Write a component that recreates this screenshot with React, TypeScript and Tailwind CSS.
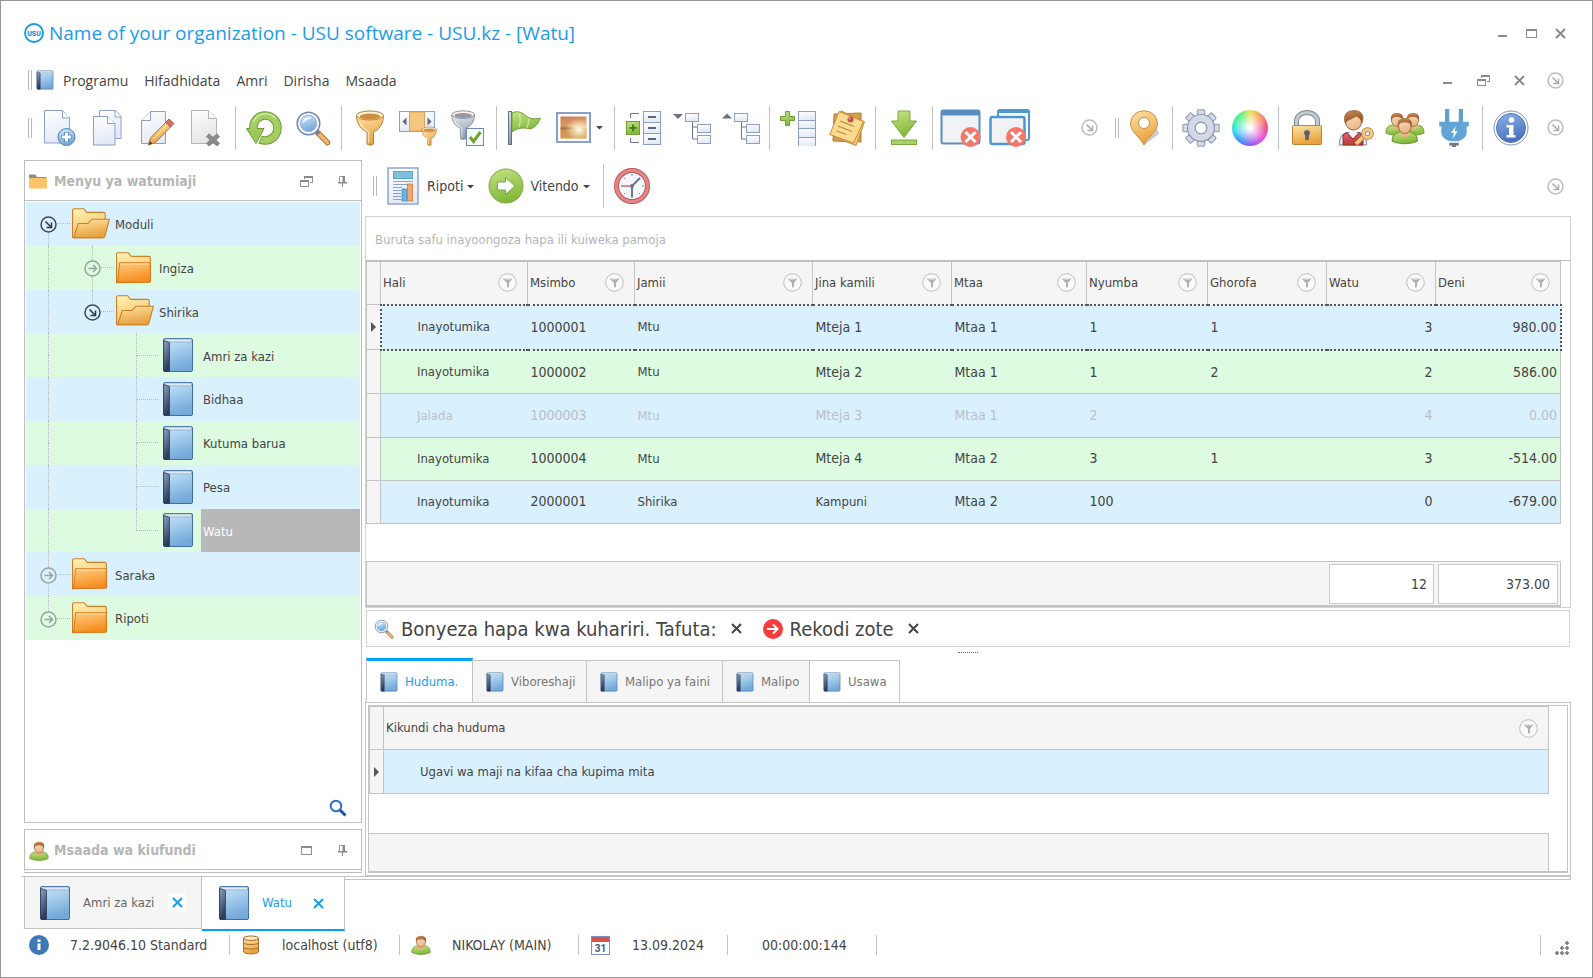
import { useState } from 'react'
import type { ReactNode } from 'react'
import clsx from 'clsx'

type IconProps = { size?: number; box?: number; children: ReactNode }

function Icon({ size = 36, box = 36, children }: IconProps) {
  return (
    <svg width={size} height={size} viewBox={`0 0 ${box} ${box}`} fill="none" className="shrink-0" aria-hidden="true">
      {children}
    </svg>
  )
}

const gradients: [string, string, string][] = [
  ['paper', '#ffffff', '#e3e9f5'],
  ['gray', '#fdfdfd', '#e6e6e6'],
  ['green', '#c5e384', '#83b93c'],
  ['gold', '#fde3a6', '#e9a23f'],
  ['steel', '#eceff4', '#8f9aad'],
  ['blue', '#cdeafa', '#74a9d8'],
  ['navy', '#8da2c0', '#2c3a5c'],
  ['orange', '#ffcd80', '#f58f22'],
  ['cream', '#fff3b8', '#f3bf62'],
  ['red', '#e0696c', '#b93a40'],
  ['info', '#8fb1e6', '#4a73bd'],
  ['skin', '#fbe0c0', '#eab688'],
  ['hair', '#c98a55', '#8e5427'],
  ['sunset', '#c77b52', '#f7c98a'],
]

function Gradients() {
  return (
    <svg className="absolute size-0" aria-hidden="true">
      <defs>
        {gradients.map(([id, from, to]) => (
          <linearGradient key={id} id={id} x1="0" y1="0" x2="0.3" y2="1">
            <stop offset="0" stopColor={from} />
            <stop offset="1" stopColor={to} />
          </linearGradient>
        ))}
        <radialGradient id="sun" cx="0.7" cy="0.6" r="0.5">
          <stop offset="0" stopColor="#fffbe0" />
          <stop offset="1" stopColor="#fffbe0" stopOpacity="0" />
        </radialGradient>
      </defs>
    </svg>
  )
}

/* ---------- icons ---------- */

function Book({ size = 36 }: { size?: number }) {
  return (
    <Icon size={size}>
      <rect x="3.5" y="1.5" width="29" height="33" rx="1.5" fill="url(#blue)" stroke="#3f6ea8" />
      <path d="M4 3.5C4 2.500 5 2 6 2h25.500v3H10z" fill="#dce8f2" stroke="#7f9cbd" strokeWidth=".6" />
      <path d="M3.500 3.500 9.500 5.500V34.500H5A1.500 1.500 0 0 1 3.500 33z" fill="url(#navy)" stroke="#2c3a5c" strokeWidth=".8" />
    </Icon>
  )
}

function Folder() {
  return (
    <Icon size={38}>
      <path d="M.5 32V5c0-1 .5-1.500 1.500-1.500h9.500l3 3.500H31c1 0 1.500.5 1.500 1.500V31z" fill="url(#cream)" stroke="#c97f27" />
      <path d="M3.500 13h29v17c0 1-.5 1.500-1.500 1.500H1.500z" fill="url(#orange)" stroke="#d9781a" />
      <path d="M4.500 14.200H31.500" stroke="#ffe0a8" />
    </Icon>
  )
}

function OpenFolder() {
  return (
    <Icon size={38}>
      <path d="M.5 30.500V5c0-1 .5-1.500 1.500-1.500h9l3 3.500H30c1 0 1.500.5 1.500 1.500V18L29 31H1.500c-.6 0-1 0-1-.5z" fill="url(#cream)" stroke="#c97f27" />
      <path d="M1.500 31 6 17.500h9l4-4h16.500L31 30c-.3.800-.7 1-1.500 1z" fill="url(#gold)" stroke="#c97f27" />
    </Icon>
  )
}

function Magnifier({ size = 36 }: { size?: number }) {
  return (
    <Icon size={size}>
      <path d="m23 23 9.500 9.500" stroke="#b06f2e" strokeWidth="5.500" strokeLinecap="round" />
      <path d="m24.500 24.500 8 8" stroke="#f0b878" strokeWidth="3.500" strokeLinecap="round" />
      <path d="m20 20 4 4" stroke="#6f84ad" strokeWidth="3" />
      <circle cx="13.500" cy="13.500" r="11.300" fill="#fff" stroke="#7288bd" strokeWidth="1.500" />
      <circle cx="13.500" cy="13.500" r="8.300" fill="url(#blue)" stroke="#9db1d8" />
      <path d="M7.500 13a6 6 0 0 1 6-6c2 0 3 .6 3 1.500-5 .5-6.500 4-9 4.500z" fill="#fff" opacity=".8" />
    </Icon>
  )
}

function NewPage() {
  return (
    <Icon>
      <path d="M2.500.5h18l7 7.500v25h-25z" fill="url(#paper)" stroke="#8c9fca" />
      <path d="M20.500.5V8h7" fill="#fff" stroke="#8c9fca" />
      <circle cx="24.500" cy="27" r="8.500" fill="url(#blue)" stroke="#4f80bb" />
      <path d="M24.500 22v10M19.500 27h10" stroke="#4f80bb" strokeWidth="4.500" />
      <path d="M24.500 22.500v9M20 27h9" stroke="#fff" strokeWidth="2.800" />
    </Icon>
  )
}

function CopyPages() {
  return (
    <Icon>
      <path d="M8.500.5h16l5.500 6v22H8.500z" fill="url(#paper)" stroke="#8c9fca" />
      <path d="M24 .5V7h6" fill="#fff" stroke="#8c9fca" />
      <path d="M2.500 6.500h14L24 13.500V35H2.500z" fill="url(#paper)" stroke="#8c9fca" />
      <path d="M16.500 6.500v7H24" fill="#fff" stroke="#8c9fca" />
    </Icon>
  )
}

function EditPage() {
  return (
    <Icon>
      <path d="M10.500 1.500h15v32h-24v-23z" fill="url(#paper)" stroke="#8c9fca" />
      <path d="M10.500 1.500v9h-9" fill="#fff" stroke="#8c9fca" />
      <path d="m8.500 35 2-7L26 12l5 4.500L15.500 32.500z" fill="url(#gold)" stroke="#b9752c" />
      <path d="m25.500 12.500 3.500-3.500 5 4.500-3.500 3.500z" fill="#d96a5f" stroke="#a94a40" strokeWidth=".8" />
      <path d="m8.500 35 1.300-4 2.700 2.600z" fill="#444" />
      <path d="M13 29.500 27.500 14.500" stroke="#fff0cc" />
    </Icon>
  )
}

function DeletePage() {
  return (
    <Icon>
      <path d="M2.500.5h17l8 8v25h-25z" fill="url(#gray)" stroke="#b5b5b5" />
      <path d="M19.500.5v8h8" fill="#fff" stroke="#b5b5b5" />
      <path d="m18.500 25 11 10M29.500 25l-11 10" stroke="#8a8a8a" strokeWidth="4.500" />
    </Icon>
  )
}

function Refresh() {
  return (
    <Icon>
      <path d="M7.500 20C6.500 11.500 12 5.500 19 5.500S31.500 11 31.500 18 26 30.500 19 30.500c-2 0-3.500-.4-5-1" stroke="#6b9a35" strokeWidth="8.500" />
      <path d="M.5 18.500H18L10 33.500z" fill="#9dc958" stroke="#6b9a35" />
      <path d="M7.500 20C6.500 11.500 12 5.500 19 5.500S31.500 11 31.500 18 26 30.500 19 30.500c-1.700 0-3-.3-4.500-.8" stroke="#a4ce62" strokeWidth="6.600" />
      <path d="M7 12.500C9.500 7 14 3.700 19.500 3.700c4 0 7.500 1.500 10 4.500" stroke="#cfe99a" strokeWidth="1.500" />
    </Icon>
  )
}

function FunnelShape({ fill, stroke, hole }: { fill: string; stroke: string; hole: string }) {
  return (
    <g>
      <path d="M4.500 5.500c0 9 5 14 10.500 16.500V34c2 1.500 4.500 1.500 6.500 0V22c5-2.500 10-7.500 10-16.500z" fill={fill} stroke={stroke} />
      <ellipse cx="18" cy="5.500" rx="13.500" ry="4.500" fill="#fff4dd" stroke={stroke} />
      <ellipse cx="18" cy="6.500" rx="10.500" ry="3" fill={hole} />
      <path d="M8 13c1.500 4 5 7 8.500 9v11" stroke="#fff" strokeWidth="1.500" opacity=".55" />
    </g>
  )
}

function Funnel() {
  return <Icon><FunnelShape fill="url(#gold)" stroke="#bd7b2c" hole="#cf8f43" /></Icon>
}

function ColumnFilter() {
  return (
    <svg width="40" height="36" viewBox="0 0 40 36" fill="none" aria-hidden="true">
      <rect x=".5" y="1.500" width="35" height="20" fill="url(#paper)" stroke="#8c9fca" />
      <rect x="10.500" y="2" width="15" height="19" fill="#f6c77f" stroke="#dda557" />
      <path d="M7.500 7.500v8l-4-4zM28.500 7.500v8l4-4z" fill="#5d6580" />
      <g transform="translate(20.500 16.500) scale(.54)"><FunnelShape fill="url(#gold)" stroke="#a9621c" hole="#cf8f43" /></g>
    </svg>
  )
}

function FilterCheck() {
  return (
    <Icon>
      <g transform="translate(-2 0) scale(.84)"><FunnelShape fill="url(#steel)" stroke="#7a8497" hole="#8f99aa" /></g>
      <rect x="16.500" y="18.500" width="17" height="17" fill="#f6f9fd" stroke="#7288bd" />
      <path d="m20 27 3.500 4.500L30.500 22" stroke="#6fa52e" strokeWidth="3" />
    </Icon>
  )
}

function Flag() {
  return (
    <Icon>
      <rect x="1.500" y="1.500" width="3" height="33" fill="url(#steel)" stroke="#66708a" />
      <path d="M5 3c6-3 11 0 14 3 4 3 9 3.500 14.500 2-1.500 3-3 7-7 9.500-3.500 2.500-6 .5-10 .5-5 0-8 1.500-11.500 4z" fill="url(#green)" stroke="#6d9e37" />
      <path d="M12 3c2 5 1 11 0 14M22 8c0 4-1 7-2 10" stroke="#d8efae" strokeWidth="1.500" opacity=".7" />
    </Icon>
  )
}

function Picture() {
  return (
    <Icon>
      <rect x="1" y="3" width="33" height="29" fill="#fff" stroke="#8c9fca" strokeWidth="2" />
      <rect x="4.500" y="6.500" width="26" height="22" fill="url(#sunset)" />
      <path d="M4.500 18h26v10.500h-26z" fill="#c98743" opacity=".7" />
      <path d="M4.500 16.500c5 0 10 .5 14 1.500-4 1-9 1.500-14 1.500z" fill="#8a5a36" opacity=".5" />
      <rect x="4.500" y="6.500" width="26" height="22" fill="url(#sun)" />
    </Icon>
  )
}

function GroupRows() {
  return (
    <Icon>
      <path d="M14 3.500H5.500V8M5.500 28v4.500H14" stroke="#6b7390" />
      <rect x="1.500" y="11.500" width="13" height="13" fill="url(#green)" stroke="#6d9e37" />
      <path d="M8 14.500v7M4.500 18h7" stroke="#4c7a1e" strokeWidth="2" />
      {[1.500, 12.500, 23.500].map((y) => (
        <g key={y}>
          <rect x="18.500" y={y} width="17" height="11" fill="url(#paper)" stroke="#8c9fca" />
          <path d={`M23 ${y + 5.500}h8`} stroke="#5d6580" strokeWidth="2" />
        </g>
      ))}
    </Icon>
  )
}

function Tree({ up = false }: { up?: boolean }) {
  return (
    <svg width="38" height="36" viewBox="0 0 38 36" fill="none" aria-hidden="true">
      <path d={up ? 'M0 8.500h10L5 3.500z' : 'M0 4h10L5 9z'} fill="#6a7088" />
      <path d="M19.500 11v18H26M19.500 17H26" stroke="#6b7390" />
      <rect x="12.500" y="3.500" width="13" height="8" fill="url(#paper)" stroke="#8c9fca" />
      <rect x="24.500" y="14.500" width="13" height="8" fill="url(#paper)" stroke="#8c9fca" />
      <rect x="24.500" y="25.500" width="13" height="8" fill="url(#paper)" stroke="#8c9fca" />
    </svg>
  )
}

function AddColumn() {
  return (
    <Icon>
      <path d="M5.500 1.500h4v5h5v4h-5v5h-4v-5h-5v-4h5z" fill="url(#green)" stroke="#6d9e37" />
      {[1.500, 10.500, 18.500, 27.500].map((y) => (
        <rect key={y} x="18.500" y={y} width="17" height={y === 10.5 ? 8 : 9} fill="url(#paper)" stroke="#8c9fca" />
      ))}
    </Icon>
  )
}

function Notes() {
  return (
    <Icon>
      <path d="M5 4 32 3v29L4 31z" fill="#d8a04e" stroke="#b37d30" />
      <path d="m12 .8 23.500 11L27 35.500 5 27z" fill="#f3c877" stroke="#c48c3b" />
      <path d="m10 1.500 24.500 10L24.500 33 .8 24.500z" fill="#fbdc8f" stroke="#c48c3b" />
      <path d="m11 11 14 5.500M9 16l14 5.500M7.500 21l10 3.500" stroke="#b8893e" strokeWidth="1.300" />
      <circle cx="21.500" cy="9.500" r="3" fill="#c64a50" />
      <circle cx="20.500" cy="8.500" r="1.100" fill="#f3a5a5" />
    </Icon>
  )
}

function Download() {
  return (
    <Icon>
      <path d="M12 1h12v10h6.500L18 27.500 5.500 11H12z" fill="url(#green)" stroke="#7aab41" />
      <rect x="5.500" y="30" width="25" height="4.500" fill="#a9cf68" stroke="#7aab41" />
    </Icon>
  )
}

function RedCross({ cx }: { cx: number }) {
  return (
    <g>
      <circle cx={cx} cy="28" r="10" fill="#f5776b" />
      <path d={`m${cx - 5} 23 10 10m0-10-10 10`} stroke="#fff" strokeWidth="3" />
    </g>
  )
}

function CloseWindow() {
  return (
    <svg width="41" height="38" viewBox="0 0 41 38" fill="none" aria-hidden="true">
      <rect x="1.500" y="1.500" width="38" height="33" rx="2" fill="#f1f2f4" stroke="#5b8dc4" strokeWidth="2" />
      <path d="M1.500 1h38v5.500h-38z" fill="#5b8dc4" />
      <RedCross cx={30.500} />
    </svg>
  )
}

function CloseAllWindows() {
  return (
    <svg width="41" height="38" viewBox="0 0 41 38" fill="none" aria-hidden="true">
      <rect x="9" y="1" width="31" height="30" rx="2" fill="#fff" stroke="#4a98cf" strokeWidth="2" />
      <path d="M9 1h31v3H9z" fill="#4a98cf" />
      <rect x="1.500" y="8" width="34" height="27" rx="2" fill="#f1f2f4" stroke="#4a98cf" strokeWidth="2.500" />
      <RedCross cx={27} />
    </svg>
  )
}

function Pin() {
  return (
    <Icon>
      <path d="M18 35 31 19l2 5z" fill="#aaa" opacity=".6" />
      <path d="M18 35C14 27 4.500 22 4.500 13.500a13.500 12.800 0 0 1 27 0C31.500 22 22 27 18 35z" fill="url(#gold)" stroke="#c78f45" />
      <circle cx="18" cy="13" r="5.500" fill="#fff" stroke="#c78f45" />
    </Icon>
  )
}

function Gear() {
  return (
    <Icon size={38}>
      {[0, 45, 90, 135].map((a) => (
        <rect key={a} x="14.500" y=".8" width="7" height="34.400" rx="1" fill="#d3dae6" stroke="#8c9ab5" transform={`rotate(${a} 18 18)`} />
      ))}
      <circle cx="18" cy="18" r="12.800" fill="url(#steel)" stroke="#8c9ab5" />
      <circle cx="18" cy="18" r="12" fill="#d3dae6" />
      <circle cx="18" cy="18" r="5.500" fill="#fff" stroke="#8c9ab5" strokeWidth="1.200" />
    </Icon>
  )
}

function ColorWheel() {
  return (
    <span className="size-9 rounded-full bg-[radial-gradient(circle,white_5%,transparent_65%),conic-gradient(#e8e45a,#f79a5c_40deg,#ee4f86_85deg,#e84fd8_130deg,#8a5cf0_180deg,#3f8cf5_215deg,#35d0f5_255deg,#3df0b0_290deg,#5cf07a_325deg,#e8e45a)]" />
  )
}

function Padlock() {
  return (
    <Icon>
      <path d="M7.500 16v-5a10.500 8.500 0 0 1 21 0v5" stroke="#7f8792" strokeWidth="5" />
      <path d="M7.500 16v-5a10.500 8.500 0 0 1 21 0v5" stroke="#c3cad3" strokeWidth="3" />
      <rect x="3.500" y="15.500" width="29" height="19" rx="1" fill="url(#gold)" stroke="#b98331" />
      <path d="M18 20a3 3 0 0 1 1.800 5.400V30h-3.600v-4.600A3 3 0 0 1 18 20z" fill="#5a6270" />
    </Icon>
  )
}

function UserKey() {
  return (
    <Icon>
      <path d="M1.500 35c0-8 2-11 8-12.500h11c6 1.500 8 4.500 8 12.500z" fill="#f4f4f6" stroke="#777f8f" />
      <path d="M5 35V25l4-2.500 6 6.500 6-6.500 4 2.500v10z" fill="url(#red)" stroke="#8f2e33" />
      <path d="m11 22 4 6 4-6z" fill="#fff" />
      <circle cx="15.500" cy="12" r="8" fill="url(#skin)" stroke="#9a6534" />
      <path d="M7 13C5 4 9 .5 16 .5S27 5 24 13c-1-4-3-6-6-7-3 3-8 3-11 7z" fill="url(#hair)" stroke="#8e5427" strokeWidth=".6" />
      <path d="m18 34 9-9" stroke="#b07830" strokeWidth="5" />
      <path d="m18 34 9-9" stroke="#f2c98c" strokeWidth="3.200" />
      <circle cx="29.500" cy="23.500" r="4" stroke="#b07830" strokeWidth="4.500" />
      <circle cx="29.500" cy="23.500" r="4" stroke="#f2c98c" strokeWidth="3" />
    </Icon>
  )
}

function Person({ x, y }: { x: number; y: number }) {
  return (
    <g transform={`translate(${x} ${y})`}>
      <path d="M.5 20c0-6 3-7.500 7-8h8c4 .5 7 2 7 8-6 3-16 3-22 0z" fill="url(#green)" stroke="#6d9e37" />
      <path d="M7.500 11v4c2.500 2 5.500 2 8 0v-4z" fill="#eab688" />
      <ellipse cx="11.500" cy="7" rx="5.500" ry="6.500" fill="url(#skin)" stroke="#9a6534" strokeWidth=".8" />
      <path d="M5.500 8C4.500 2 7 .3 11.500.3S18.500 2 17.500 8c-1-3-2-4-6-4s-5 1-6 4z" fill="url(#hair)" />
    </g>
  )
}

function Users() {
  return (
    <svg width="40" height="36" viewBox="0 0 40 36" fill="none" aria-hidden="true">
      <Person x={0.5} y={3} />
      <Person x={16.500} y={3} />
      <g transform="translate(6 8) scale(1.150)"><Person x={0.5} y={0} /></g>
    </svg>
  )
}

function User({ size = 20 }: { size?: number }) {
  return (
    <Icon size={size} box={24}>
      <g transform="translate(.5 1)"><Person x={0} y={0} /></g>
    </Icon>
  )
}

function Plug() {
  return (
    <Icon size={38}>
      <path d="M11.500 0v13M24.500 0v13" stroke="#5f9fd2" strokeWidth="4" />
      <path d="M4 12h28v4.500h-2V22c0 4.500-4 7.500-8.500 8.500h-7C10 29.500 6 26.500 6 22v-5.500H4z" fill="#63a4d6" />
      <path d="M13.500 32h9v2.500H20V36h-4v-1.500h-2.500z" fill="#737b85" />
      <path d="m20 16-5 6.500h3l-1.500 6 5-7.500h-3z" fill="#fff" />
    </Icon>
  )
}

function Info() {
  return (
    <Icon>
      <circle cx="18" cy="18" r="17" fill="#fff" stroke="#7b93c4" />
      <circle cx="18" cy="18" r="14.500" fill="url(#info)" stroke="#5576b5" />
      <circle cx="18.500" cy="10" r="2.800" fill="#fff" />
      <path d="M13.500 15h7v10h2v2.500h-9V25h2.500v-7.500h-2.500z" fill="#fff" />
    </Icon>
  )
}

function ReportIcon() {
  return (
    <svg width="32" height="38" viewBox="0 0 32 38" fill="none" aria-hidden="true">
      <rect x="1" y="1" width="30" height="36" fill="url(#paper)" stroke="#8aa6d6" strokeWidth="1.500" />
      <rect x="6.500" y="4.500" width="19" height="7" fill="#7fc0e0" stroke="#5ba3ca" />
      <path d="M6 14.500h20M6 17.500h15M6 20.500h9M6 23.500h8M6 26.500h8M6 29.500h8M6 32.500h8" stroke="#8fa3c6" />
      <rect x="15" y="22" width="5" height="12" fill="#6cb5dc" stroke="#3f8fbd" strokeWidth=".8" />
      <rect x="20.500" y="17" width="5" height="17" fill="#f3a56a" stroke="#d07a3c" strokeWidth=".8" />
    </svg>
  )
}

function GoIcon() {
  return (
    <Icon>
      <circle cx="18" cy="18" r="17" fill="url(#green)" stroke="#79a743" />
      <path d="M9.500 14h8V9.500L27 18l-9.500 8.500V22h-8z" fill="#fff" stroke="#79a743" />
    </Icon>
  )
}

function Clock() {
  return (
    <Icon>
      <circle cx="18" cy="18" r="15.500" fill="#f5f7fb" stroke="#b24a4f" strokeWidth="5" />
      <circle cx="18" cy="18" r="15.500" stroke="#e08585" strokeWidth="3.500" />
      <path d="M18 6v2M18 28v2M28 18h2M10 10l1 1M10 26l1-1M26 26l-1-1" stroke="#7c87a6" />
      <path d="M18 18 26 10M18 18v11" stroke="#6b7690" strokeWidth="2" />
      <path d="M18 18H7" stroke="#d66b6b" strokeWidth="1.500" />
      <circle cx="18" cy="18" r="2" fill="#6b7690" />
    </Icon>
  )
}

function CircleArrow({ right = false, dark = false }: { right?: boolean; dark?: boolean }) {
  return (
    <Icon size={17} box={17}>
      <circle cx="8.500" cy="8.500" r="7.500" stroke={dark ? '#3f4a50' : right ? '#93a59f' : '#bdbdbd'} strokeWidth="1.500" />
      <path
        d={right ? 'M4.500 8.500h8M9 5l3.500 3.500L9 12' : 'm5.500 5.500 5.500 5.500M11.500 6.500v5h-5'}
        stroke={dark ? '#2f3a40' : right ? '#93a59f' : '#ababab'}
        strokeWidth="1.500"
      />
    </Icon>
  )
}

function MinimizeIcon() {
  return <Icon size={13} box={13}><path d="M2 9h9" stroke="#8a8a8a" strokeWidth="2" /></Icon>
}

function MaximizeIcon() {
  return (
    <Icon size={13} box={13}>
      <rect x="1.500" y="2.500" width="10" height="8" stroke="#8f8f8f" />
      <path d="M1 3h11" stroke="#8a8a8a" strokeWidth="2" />
    </Icon>
  )
}

function RestoreIcon() {
  return (
    <Icon size={13} box={13}>
      <path d="M4.500 4V1.500h8v6H10" stroke="#8f8f8f" />
      <path d="M4 2h9" stroke="#8a8a8a" strokeWidth="2" />
      <rect x=".5" y="5.500" width="8" height="6" stroke="#8f8f8f" />
      <path d="M0 6h9" stroke="#8a8a8a" strokeWidth="2" />
    </Icon>
  )
}

function CrossIcon({ color = '#8a8a8a' }: { color?: string }) {
  return <Icon size={13} box={13}><path d="m2 2 9 9m0-9-9 9" stroke={color} strokeWidth="2" /></Icon>
}

function TackIcon() {
  return (
    <Icon size={11} box={11}>
      <path d="M2.500 6.500v-6h5v6" stroke="#9a9a9a" />
      <path d="M5.500 0h2.500v6H5.500zM1 6h9v1.500H1zM5 7h1v4H5z" fill="#8a8a8a" />
    </Icon>
  )
}

function FilterBadge() {
  return (
    <Icon size={19} box={19}>
      <circle cx="9.500" cy="9.500" r="8.800" fill="#fafafa" stroke="#bdbdbd" />
      <path d="M4.500 5.500h10L11 10v3.500l-1 1h-1v-4.500z" fill="#b0b0b0" />
      <ellipse cx="9.500" cy="5.800" rx="4" ry=".8" fill="#e8e8e8" />
    </Icon>
  )
}

function Grip() {
  return <span className="h-5 w-1 shrink-0 border-x border-[#b9b9b9]" />
}

function Separator() {
  return (
    <span className="flex w-2 shrink-0 justify-center">
      <span className="h-11 w-px bg-[#c2c2c2]" />
    </span>
  )
}

function Caret() {
  return <Icon size={7} box={7}><path d="M0 2h7L3.500 5.500z" fill="#444" /></Icon>
}

function ToolButton({ label, wide, children }: { label: string; wide?: boolean; children: ReactNode }) {
  return (
    <button
      type="button"
      aria-label={label}
      className={clsx('flex h-12 shrink-0 items-center justify-center hover:bg-gray-100', wide ? 'w-[61px] gap-1' : 'w-[49px]')}
    >
      {children}
    </button>
  )
}

function SmallButton({ label, className, children }: { label: string; className: string; children: ReactNode }) {
  return (
    <button type="button" aria-label={label} className={clsx('flex h-6 shrink-0 items-center justify-center hover:bg-gray-100', className)}>
      {children}
    </button>
  )
}

/* ---------- header ---------- */

function TitleBar() {
  return (
    <header className="flex h-16 items-center pr-[17px] pl-[22px]">
      <svg width="22" height="22" viewBox="0 0 22 22" aria-hidden="true">
        <circle cx="11" cy="11" r="9" fill="#fff" stroke="#1496e8" strokeWidth="1.800" />
        <text x="11" y="13.500" textAnchor="middle" fontSize="7" fontWeight="900" fill="#1496e8" fontFamily="Roboto, sans-serif">USU</text>
      </svg>
      <h1 className="ml-1 font-['Open_Sans','Noto_Sans',sans-serif] text-[19px] text-[#1c9bea]">
        Name of your organization - USU software - USU.kz - [Watu]
      </h1>
      <div className="ml-auto flex">
        <SmallButton label="Minimize" className="w-[29px]"><MinimizeIcon /></SmallButton>
        <SmallButton label="Maximize" className="w-[29px]"><MaximizeIcon /></SmallButton>
        <SmallButton label="Close" className="w-[29px]"><CrossIcon /></SmallButton>
      </div>
    </header>
  )
}

const menuItems = ['Programu', 'Hifadhidata', 'Amri', 'Dirisha', 'Msaada']

function MenuBar() {
  return (
    <nav className="flex h-[30px] items-center pr-[18px] pl-[27px]">
      <Grip />
      <span className="ml-[3px]"><Book size={20} /></span>
      <ul className="ml-2 flex gap-4 font-['Open_Sans','Noto_Sans',sans-serif]">
        {menuItems.map((item) => (
          <li key={item}><button type="button">{item}</button></li>
        ))}
      </ul>
      <div className="ml-auto flex">
        <SmallButton label="Minimize child window" className="w-9"><MinimizeIcon /></SmallButton>
        <SmallButton label="Restore child window" className="w-9"><RestoreIcon /></SmallButton>
        <SmallButton label="Close child window" className="w-9"><CrossIcon /></SmallButton>
        <SmallButton label="Customize menu" className="w-[37px]"><CircleArrow /></SmallButton>
      </div>
    </nav>
  )
}

function ToolBar() {
  return (
    <div className="flex h-[65px] items-center pr-[18px] pl-[27px]">
      <Grip />
      <div className="ml-[3px] flex items-center">
        <ToolButton label="New"><NewPage /></ToolButton>
        <ToolButton label="Copy"><CopyPages /></ToolButton>
        <ToolButton label="Edit"><EditPage /></ToolButton>
        <ToolButton label="Delete"><DeletePage /></ToolButton>
        <Separator />
        <ToolButton label="Refresh"><Refresh /></ToolButton>
        <ToolButton label="Search"><Magnifier /></ToolButton>
        <Separator />
        <ToolButton label="Filter"><Funnel /></ToolButton>
        <ToolButton label="Filter columns"><ColumnFilter /></ToolButton>
        <ToolButton label="Apply filter"><FilterCheck /></ToolButton>
        <Separator />
        <ToolButton label="Flag"><Flag /></ToolButton>
        <ToolButton label="Picture" wide><Picture /><Caret /></ToolButton>
        <Separator />
        <ToolButton label="Group rows"><GroupRows /></ToolButton>
        <ToolButton label="Expand tree"><Tree /></ToolButton>
        <ToolButton label="Collapse tree"><Tree up /></ToolButton>
        <Separator />
        <ToolButton label="Add column"><AddColumn /></ToolButton>
        <ToolButton label="Notes"><Notes /></ToolButton>
        <Separator />
        <ToolButton label="Download"><Download /></ToolButton>
        <Separator />
        <ToolButton label="Close window"><CloseWindow /></ToolButton>
        <ToolButton label="Close all windows"><CloseAllWindows /></ToolButton>
      </div>
      <div className="ml-auto flex items-center">
        <SmallButton label="Customize toolbar" className="mr-2 w-9"><CircleArrow /></SmallButton>
        <Grip />
        <ToolButton label="Location"><Pin /></ToolButton>
        <Separator />
        <ToolButton label="Settings"><Gear /></ToolButton>
        <ToolButton label="Colors"><ColorWheel /></ToolButton>
        <Separator />
        <ToolButton label="Lock"><Padlock /></ToolButton>
        <ToolButton label="User rights"><UserKey /></ToolButton>
        <ToolButton label="Users"><Users /></ToolButton>
        <ToolButton label="Connection"><Plug /></ToolButton>
        <Separator />
        <ToolButton label="Info"><Info /></ToolButton>
        <SmallButton label="Customize second toolbar" className="ml-0.5 w-[37px]"><CircleArrow /></SmallButton>
      </div>
    </div>
  )
}

/* ---------- left side ---------- */

// one letter per indent cell: i = line, t = branch, l = last branch, f = first branch, ' ' = empty
type TreeNode = { label: string; kind: 'open' | 'closed' | 'book'; guides: string }

const treeNodes: TreeNode[] = [
  { label: 'Moduli', kind: 'open', guides: 'f' },
  { label: 'Ingiza', kind: 'closed', guides: 'it' },
  { label: 'Shirika', kind: 'open', guides: 'il' },
  { label: 'Amri za kazi', kind: 'book', guides: 'i t' },
  { label: 'Bidhaa', kind: 'book', guides: 'i t' },
  { label: 'Kutuma barua', kind: 'book', guides: 'i t' },
  { label: 'Pesa', kind: 'book', guides: 'i t' },
  { label: 'Watu', kind: 'book', guides: 'i l' },
  { label: 'Saraka', kind: 'closed', guides: 't' },
  { label: 'Ripoti', kind: 'closed', guides: 'l' },
]

function Guide({ type, children }: { type: string; children?: ReactNode }) {
  return (
    <span className="relative flex w-11 shrink-0 flex-col pl-[22px]">
      <span
        className={clsx(
          'flex-1 border-dotted border-[#b4bcc0]',
          'itl'.includes(type) && 'border-l',
          'tlf'.includes(type) && 'border-b',
        )}
      />
      <span className={clsx('flex-1 border-dotted border-[#b4bcc0]', 'itf'.includes(type) && 'border-l')} />
      {children && <span className="absolute inset-0 flex items-center justify-center pt-0.5">{children}</span>}
    </span>
  )
}

function TreeRow({ node, odd, selected, onSelect }: { node: TreeNode; odd: boolean; selected: boolean; onSelect: () => void }) {
  const guides = node.guides.split('')
  return (
    <li className={clsx('flex', odd ? 'bg-[#ddfbe1]' : 'bg-[#d9f1ff]')}>
      {guides.map((type, i) => (
        <Guide key={i} type={type}>
          {i === guides.length - 1 && node.kind !== 'book' && (
            <span className={clsx('rounded-full', odd ? 'bg-[#ddfbe1]' : 'bg-[#d9f1ff]')}>
              <CircleArrow right={node.kind === 'closed'} dark={node.kind === 'open'} />
            </span>
          )}
        </Guide>
      ))}
      <span className="flex w-[43px] shrink-0 items-center pl-0.5">
        {node.kind === 'open' && <OpenFolder />}
        {node.kind === 'closed' && <Folder />}
        {node.kind === 'book' && <Book />}
      </span>
      <button
        type="button"
        onClick={onSelect}
        className={clsx('flex-1 pt-0.5 pl-0.5 text-left', selected && 'bg-[#b8b8b8] text-white')}
      >
        {node.label}
      </button>
    </li>
  )
}

function SideColumn() {
  const [selected, setSelected] = useState('Watu')

  return (
    <aside className="flex w-[338px] shrink-0 flex-col gap-1.5 pb-[3px]">
      <section className="flex flex-1 flex-col border border-[#bdbdbd]">
        <div className="flex h-10 items-center border-b border-[#bdbdbd] pt-px pl-1">
          <svg width="18" height="15" viewBox="0 0 18 15" aria-hidden="true">
            <path d="M0 1.500C0 .7.500.5 1 .5h5.500L8 3h9.500v3H0z" fill="#8c8c8c" />
            <path d="M0 4h18v10.500H0z" fill="#fdc467" />
          </svg>
          <h2 className="ml-[7px] font-bold text-[#b5b5b5]">Menyu ya watumiaji</h2>
          <SmallButton label="Restore panel" className="ml-auto w-9"><RestoreIcon /></SmallButton>
          <SmallButton label="Pin panel" className="w-[37px]"><TackIcon /></SmallButton>
        </div>
        <ul className="mt-px grid h-[438px] auto-rows-fr px-px text-[13px]">
          {treeNodes.map((node, i) => (
            <TreeRow
              key={node.label}
              node={node}
              odd={i % 2 === 1}
              selected={selected === node.label}
              onSelect={() => setSelected(node.label)}
            />
          ))}
        </ul>
        <button type="button" aria-label="Search menu" className="mt-auto mr-3.5 mb-[5px] self-end">
          <Icon size={18} box={18}>
            <circle cx="7" cy="7" r="5.300" stroke="#2c6fd6" strokeWidth="2" />
            <path d="m11 11 5.500 5.500" stroke="#1d4fae" strokeWidth="3" />
          </Icon>
        </button>
      </section>
      <section className="flex h-11 items-center border border-b-4 border-double border-[#bdbdbd] pt-0.5 pl-1">
        <User />
        <h2 className="ml-[5px] font-bold text-[#b5b5b5]">Msaada wa kiufundi</h2>
        <SmallButton label="Maximize panel" className="ml-auto w-9"><MaximizeIcon /></SmallButton>
        <SmallButton label="Pin support panel" className="w-[37px]"><TackIcon /></SmallButton>
      </section>
    </aside>
  )
}

/* ---------- records ---------- */

const columns = [
  { name: 'Hali', width: 'w-[147px]' },
  { name: 'Msimbo', width: 'w-[107px]' },
  { name: 'Jamii', width: 'w-[178px]' },
  { name: 'Jina kamili', width: 'w-[139px]' },
  { name: 'Mtaa', width: 'w-[135px]' },
  { name: 'Nyumba', width: 'w-[121px]' },
  { name: 'Ghorofa', width: 'w-[119px]' },
  { name: 'Watu', width: 'w-[109px]' },
  { name: 'Deni', width: 'w-[125px]' },
]

const records = [
  ['Inayotumika', '1000001', 'Mtu', 'Mteja 1', 'Mtaa 1', '1', '1', '3', '980.00'],
  ['Inayotumika', '1000002', 'Mtu', 'Mteja 2', 'Mtaa 1', '1', '2', '2', '586.00'],
  ['Jalada', '1000003', 'Mtu', 'Mteja 3', 'Mtaa 1', '2', '', '4', '0.00'],
  ['Inayotumika', '1000004', 'Mtu', 'Mteja 4', 'Mtaa 2', '3', '1', '3', '-514.00'],
  ['Inayotumika', '2000001', 'Shirika', 'Kampuni', 'Mtaa 2', '100', '', '0', '-679.00'],
]

function RowMarker({ active }: { active: boolean }) {
  return (
    <td className="border border-[#c4c4c4] bg-[#f5f5f5]">
      {active && (
        <svg width="5" height="10" viewBox="0 0 5 10" className="ml-1" aria-hidden="true"><path d="M0 0v10l5-5z" fill="#555" /></svg>
      )}
    </td>
  )
}

function HeaderCell({ name, className }: { name: string; className?: string }) {
  return (
    <th scope="col" className={clsx('h-[43px] border border-[#c4c4c4] pr-2.5 pl-0.5 text-left text-[13px] font-normal', className)}>
      <span className="flex items-center justify-between">
        {name}
        <FilterBadge />
      </span>
    </th>
  )
}

function RecordGrid() {
  return (
    <section className="flex flex-col border border-[#d3d3d3]">
      <p className="flex h-[44px] items-center border-b border-[#bdbdbd] pt-0.5 pl-[9px] text-[13px] text-[#b5b5b5]">
        Buruta safu inayoongoza hapa ili kuiweka pamoja
      </p>
      <div className="pr-2.5">
        <table className="h-[263px] w-full table-fixed border-collapse border border-[#c4c4c4]">
          <thead>
            <tr className="bg-[#f5f5f5]">
              <th aria-label="Row marker" className="w-[14px] border border-[#c4c4c4]" />
              {columns.map((col) => (
                <HeaderCell key={col.name} name={col.name} className={col.width} />
              ))}
            </tr>
          </thead>
          <tbody>
            {records.map((record, i) => (
              <tr
                key={record[1]}
                className={clsx(
                  i % 2 ? 'bg-[#ddfbe1]' : 'bg-[#d9f1ff]',
                  record[0] === 'Jalada' && 'text-[#b9c0c6]',
                )}
              >
                <RowMarker active={i === 0} />
                {record.map((value, c) => (
                  <td
                    key={c}
                    className={clsx(
                      'border-[#c4c4c4] pr-[3px]',
                      c === 0 ? 'pl-9' : 'pl-[3px]',
                      /\d/.test(value) ? 'text-[14px]' : 'text-[13px]',
                      c >= 7 && 'text-right',
                      i === 0 ? 'border-y-2 border-dotted border-y-[#555]' : 'border-b',
                      i === 0 && c === 0 && 'border-l-2 border-l-[#555]',
                      i === 0 && c === 8 && 'border-r-2 border-r-[#555]',
                    )}
                  >
                    {value}
                  </td>
                ))}
              </tr>
            ))}
          </tbody>
        </table>
      </div>
      <div className="mt-[37px] mr-[9px] flex h-[46px] items-center justify-end gap-1 border border-b-2 border-[#c4c4c4] bg-[#f5f5f5] pr-0.5">
        <output aria-label="Watu" className="flex h-10 w-[105px] items-center justify-end border border-[#c9c9c9] bg-white pt-0.5 pr-1.5">12</output>
        <output aria-label="Deni" className="flex h-10 w-[120px] items-center justify-end border border-[#c9c9c9] bg-white pt-0.5 pr-[7px]">373.00</output>
      </div>
    </section>
  )
}

function FilterBar() {
  return (
    <div className="mt-0.5 mr-px ml-px flex h-[37px] items-center border border-[#d3d3d3] pl-[7px] text-[20px]">
      <Magnifier size={20} />
      <button type="button" className="ml-[7px]">Bonyeza hapa kwa kuhariri. Tafuta:</button>
      <SmallButton label="Clear search" className="mr-3.5 ml-2 w-6"><CrossIcon color="#444" /></SmallButton>
      <Icon size={20} box={20}>
        <circle cx="10" cy="10" r="10" fill="#f53b3b" />
        <path d="M4 10h10M10 5.500l4.500 4.500-4.500 4.500" stroke="#fff" strokeWidth="2" />
      </Icon>
      <button type="button" className="ml-[7px]">Rekodi zote</button>
      <SmallButton label="Clear filter" className="ml-2 w-6"><CrossIcon color="#444" /></SmallButton>
    </div>
  )
}

const detailTabs = [
  { name: 'Huduma.', width: 'w-[107px]' },
  { name: 'Viboreshaji', width: 'w-[115px]' },
  { name: 'Malipo ya faini', width: 'w-[137px]' },
  { name: 'Malipo', width: 'w-[88px]' },
  { name: 'Usawa', width: 'w-[91px]' },
]

function Details() {
  const [tab, setTab] = useState('Huduma.')

  return (
    <section className="flex flex-1 flex-col">
      <div role="tablist" className="flex h-11 items-end pl-px text-[13px]">
        {detailTabs.map(({ name, width }) => (
          <button
            key={name}
            type="button"
            role="tab"
            aria-selected={tab === name}
            onClick={() => setTab(name)}
            className={clsx(
              '-mr-px flex items-center gap-1.5 border-[#c4c4c4] pl-3',
              width,
              tab === name
                ? 'h-full border-x border-t-3 border-t-[#00a2ff] text-[#1c9bea]'
                : 'h-[42px] border border-b-0 text-[#777]',
              tab !== name && name !== 'Usawa' && 'bg-[#f5f5f5]',
              name === 'Usawa' && 'text-[#444]',
            )}
          >
            <Book size={20} />
            {name}
          </button>
        ))}
      </div>
      <div className="flex flex-1 flex-col border border-[#c4c4c4] p-0.5">
        <div className="flex flex-1 flex-col border border-b-2 border-[#c4c4c4] pr-[18px]">
          <table className="h-[88px] w-full table-fixed border-collapse">
            <thead>
              <tr className="bg-[#f5f5f5]">
                <th aria-label="Row marker" className="w-[14px] border border-[#c4c4c4]" />
                <HeaderCell name="Kikundi cha huduma" />
              </tr>
            </thead>
            <tbody>
              <tr className="bg-[#d9f1ff]">
                <RowMarker active />
                <td className="border border-[#c4c4c4] pl-9 text-[13px]">Ugavi wa maji na kifaa cha kupima mita</td>
              </tr>
            </tbody>
          </table>
          <div className="mt-auto h-[38px] border-t border-r border-[#c4c4c4] bg-[#f5f5f5]" />
        </div>
      </div>
    </section>
  )
}

function Workspace() {
  return (
    <main className="flex min-w-0 flex-1 flex-col">
      <div className="-mr-[3px] mb-1 flex h-[52px] items-center pl-2">
        <Grip />
        <button type="button" className="ml-2.5 flex items-center gap-1">
          <ReportIcon />
          <span className="ml-1">Ripoti</span>
          <Caret />
        </button>
        <button type="button" className="ml-3.5 flex items-center gap-1">
          <GoIcon />
          <span className="ml-0.5">Vitendo</span>
          <Caret />
        </button>
        <span className="ml-2.5"><Separator /></span>
        <button type="button" aria-label="Schedule" className="ml-1.5"><Clock /></button>
        <SmallButton label="Customize actions" className="ml-auto w-[37px]"><CircleArrow /></SmallButton>
      </div>
      <RecordGrid />
      <FilterBar />
      <div className="flex h-[11px] items-center justify-center">
        <span className="w-5 border-t border-dotted border-[#666]" />
      </div>
      <Details />
    </main>
  )
}

/* ---------- bottom ---------- */

function WindowTabs() {
  return (
    <div className="mr-[21px] ml-[21px] border-t border-[#c4c4c4]">
      <div className="flex h-[54px] items-start text-[13px]">
        <div className="ml-0.5 flex h-[52px] w-[178px] items-center border border-t-0 border-[#c4c4c4] bg-[#f5f5f5] pl-3 text-[#666]">
          <Book />
          <button type="button" className="ml-2.5">Amri za kazi</button>
          <button type="button" aria-label="Close Amri za kazi" className="ml-3.5 flex size-[18px] items-center justify-center bg-white">
            <CrossIcon color="#1c9bea" />
          </button>
        </div>
        <div className="flex h-[54px] w-[143px] items-center border-r border-b-2 border-[#c4c4c4] border-b-[#00a2ff] bg-white pl-3.5 text-[#1c9bea]">
          <Book />
          <button type="button" className="ml-2.5">Watu</button>
          <button type="button" aria-label="Close Watu" className="ml-[18px] flex size-[18px] items-center justify-center">
            <CrossIcon color="#1c9bea" />
          </button>
        </div>
        <div className="h-[3px] flex-1 border-r border-b border-[#c4c4c4]" />
      </div>
    </div>
  )
}

function StatusItem({ width, icon, children }: { width: string; icon?: ReactNode; children: ReactNode }) {
  return (
    <div className={clsx('flex h-5 items-center border-r border-[#c2c2c2]', width)}>
      {icon && <span className="flex w-[41px] shrink-0">{icon}</span>}
      {children}
    </div>
  )
}

function StatusBar() {
  return (
    <footer className="flex h-7 items-center pr-[23px] pl-[28px]">
      <StatusItem
        width="w-[201px]"
        icon={
          <Icon size={20} box={20}>
            <circle cx="10" cy="10" r="10" fill="#4078b5" />
            <path d="M8.500 4.500h3v2.500h-3zM8.500 8.500h3V15h-3z" fill="#fff" />
          </Icon>
        }
      >
        7.2.9046.10 Standard
      </StatusItem>
      <StatusItem
        width="w-[170px] pl-[11px]"
        icon={
          <Icon size={20} box={20}>
            <path d="M2.500 3v14c2 2.500 13 2.500 15 0V3z" fill="url(#gold)" stroke="#a96a22" />
            <ellipse cx="10" cy="3.200" rx="7.500" ry="2.200" fill="#ffeec5" stroke="#a96a22" />
            <path d="M2.500 8c2 2 13 2 15 0M2.500 12.500c2 2 13 2 15 0" stroke="#a96a22" />
          </Icon>
        }
      >
        localhost (utf8)
      </StatusItem>
      <StatusItem width="w-[179px] pl-[11px]" icon={<User />}>NIKOLAY (MAIN)</StatusItem>
      <StatusItem
        width="w-[149px] pl-3"
        icon={
          <Icon size={19} box={19}>
            <rect x=".5" y=".5" width="18" height="18" fill="#fff" stroke="#7a8fc0" />
            <path d="M1 1h17v5H1z" fill="#d8514a" />
            <text x="9.500" y="16" textAnchor="middle" fontSize="10" fontWeight="700" fill="#3b5590" fontFamily="Roboto, sans-serif">31</text>
          </Icon>
        }
      >
        13.09.2024
      </StatusItem>
      <StatusItem width="w-[149px] pl-[34px]">00:00:00:144</StatusItem>
      <div className="ml-auto flex h-5 items-end border-l border-[#c2c2c2] pl-3.5">
        <Icon size={14} box={14}>
          {[[12, 2], [7, 7], [12, 7], [2, 12], [7, 12], [12, 12]].map(([x, y]) => (
            <path key={`${x}-${y}`} d={`M${x - 2} ${y}h4M${x} ${y - 2}v4`} stroke="#777" strokeWidth="1.500" />
          ))}
        </Icon>
      </div>
    </footer>
  )
}

export default function App() {
  return (
    <div className="flex min-h-screen flex-col border border-[#969696] bg-white pb-[18px] font-['DejaVu_Sans_Condensed','Noto_Sans',sans-serif] text-[14px] text-[#444]">
      <Gradients />
      <TitleBar />
      <MenuBar />
      <ToolBar />
      <div className="flex flex-1 gap-[3px] pr-[21px] pl-[23px]">
        <SideColumn />
        <Workspace />
      </div>
      <WindowTabs />
      <StatusBar />
    </div>
  )
}
